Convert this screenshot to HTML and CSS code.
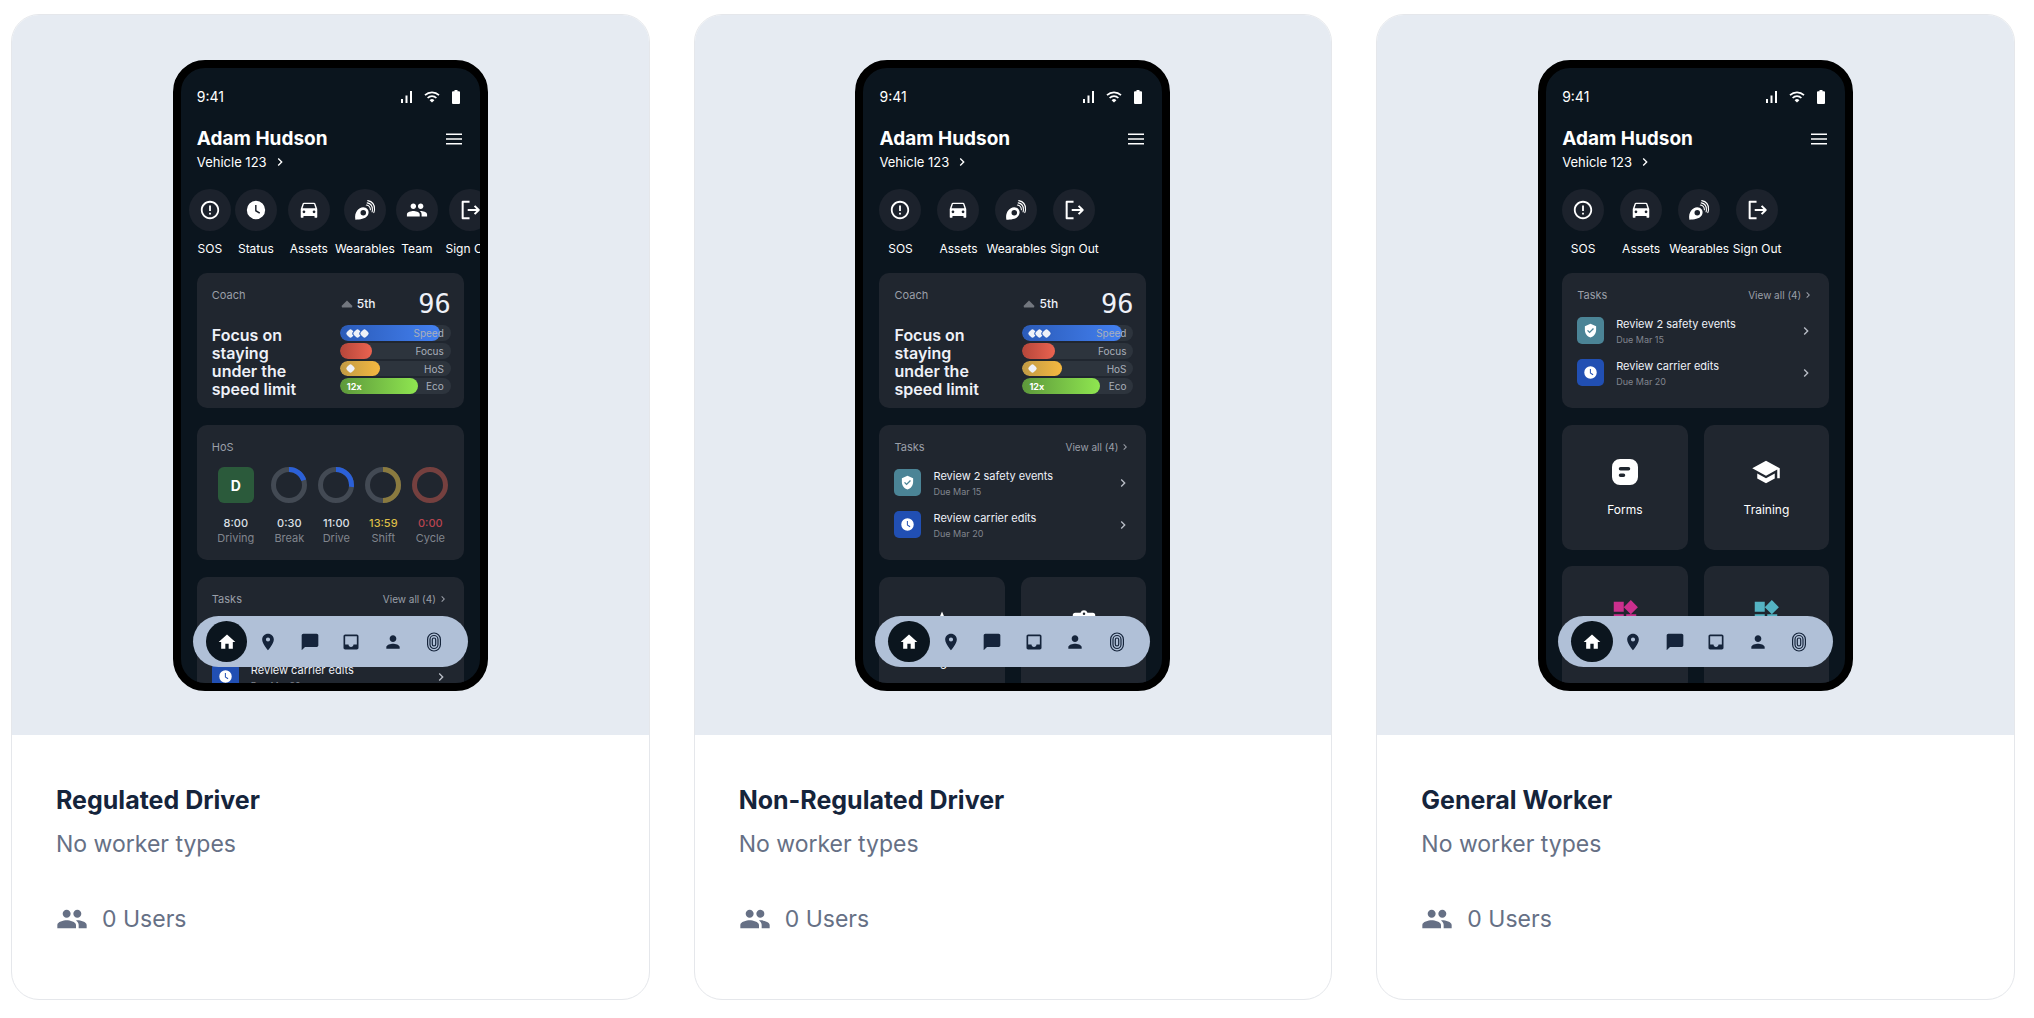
FILE: index.html
```html
<!DOCTYPE html>
<html lang="en">
<head>
<meta charset="utf-8">
<meta name="viewport" content="width=device-width, initial-scale=1">
<title>Worker profiles</title>
<link rel="stylesheet" href="styles.css">
</head>
<body>
<svg class="sprite" aria-hidden="true">
  <symbol id="signal" viewBox="0 0 12 12"><path d="M0 8h2v4H0zM4.500 4.500h2V12h-2zM9 0h2v12H9z"/></symbol>
  <symbol id="wifi" viewBox="0 0 16 12"><path fill="none" stroke="currentColor" stroke-width="1.700" d="M1 4.200a10.200 10.200 0 0 1 14 0M3.600 7a6.300 6.300 0 0 1 8.800 0"/><path d="M5.600 9.200a3.500 3.500 0 0 1 4.800 0L8 11.600z"/></symbol>
  <symbol id="battery" viewBox="0 0 8 14"><path d="M2.500 0h3v1.300H7a1 1 0 0 1 1 1V13a1 1 0 0 1-1 1H1a1 1 0 0 1-1-1V2.300a1 1 0 0 1 1-1h1.500z"/></symbol>
  <symbol id="menu" viewBox="0 0 16 12"><path d="M0 .5h16V2H0zM0 5.200h16v1.500H0zM0 10h16v1.500H0z"/></symbol>
  <symbol id="chevron" viewBox="0 0 24 24"><path d="M8.590 16.590 13.170 12 8.590 7.410 10 6l6 6-6 6z"/></symbol>
  <symbol id="sos" viewBox="0 0 24 24"><path d="M11 15h2v2h-2zm0-8h2v6h-2zm.990-5C6.470 2 2 6.480 2 12s4.470 10 9.990 10C17.520 22 22 17.520 22 12S17.520 2 11.990 2zM12 20c-4.420 0-8-3.580-8-8s3.580-8 8-8 8 3.580 8 8-3.580 8-8 8z"/></symbol>
  <symbol id="clock" viewBox="0 0 24 24"><path fill-rule="evenodd" d="M12 2a10 10 0 1 0 0 20 10 10 0 0 0 0-20zm3.600 14.200L11 13.300V6.500h1.600v5.700l4 2.600z"/></symbol>
  <symbol id="car" viewBox="0 0 24 24"><path d="M18.920 5.010C18.720 4.420 18.160 4 17.500 4h-11c-.660 0-1.210.420-1.420 1.010L3 11v8.500c0 .550.450 1 1 1h1c.550 0 1-.450 1-1V18.500h12v1c0 .550.450 1 1 1h1c.550 0 1-.450 1-1V11zM6.500 15.500a1.500 1.500 0 1 1 0-3 1.500 1.500 0 0 1 0 3zm11 0a1.500 1.500 0 1 1 0-3 1.500 1.500 0 0 1 0 3zM5 10l1.500-4.500h11L19 10z"/></symbol>
  <symbol id="wearable" viewBox="0 0 24 24"><path fill-rule="evenodd" d="M1.500 22.500c-.800-4 0-7.500 2-10C5.600 9.500 9.500 8 12.700 9.500c3.500 1.700 4.200 5.700 2 8.900-2.500 3.500-8 4.100-13.200 4.100zm8.600-10.600a3 3 0 1 0 0 6 3 3 0 0 0 0-6z"/><path fill="none" stroke="currentColor" stroke-width="1.200" stroke-linecap="round" d="M13.500 6.600c2.700.400 4.300 2.400 4.400 5.200M14.400 4.200c3.400.600 5.700 3.400 5.700 7.200 0 1-.100 1.800-.400 2.600M15 1.800c4.600.900 7.500 4.600 7.400 9.300 0 1.500-.300 2.600-.800 3.700"/></symbol>
  <symbol id="people" viewBox="0 0 24 24"><path d="M16 11c1.660 0 2.990-1.340 2.990-3S17.660 5 16 5s-3 1.340-3 3 1.340 3 3 3zm-8 0c1.660 0 2.990-1.340 2.990-3S9.660 5 8 5 5 6.340 5 8s1.340 3 3 3zm0 2c-2.330 0-7 1.170-7 3.500V19h14v-2.500c0-2.330-4.670-3.500-7-3.500zm8 0c-.290 0-.620.020-.970.050 1.160.840 1.970 1.970 1.970 3.450V19h6v-2.500c0-2.330-4.670-3.500-7-3.500z"/></symbol>
  <symbol id="signout" viewBox="0 0 24 24"><path fill="none" stroke="currentColor" stroke-width="2.200" stroke-linejoin="round" d="M11.500 3H4v18h7.500M9.500 12H21M17 7.500l4.500 4.500-4.500 4.500"/></symbol>
  <symbol id="home" viewBox="0 0 24 24"><path d="M10 20v-6h4v6h5v-8h3L12 3 2 12h3v8z"/></symbol>
  <symbol id="pin" viewBox="0 0 24 24"><path d="M12 2C8.130 2 5 5.130 5 9c0 5.250 7 13 7 13s7-7.750 7-13c0-3.870-3.130-7-7-7zm0 9.500a2.500 2.500 0 1 1 0-5 2.500 2.500 0 0 1 0 5z"/></symbol>
  <symbol id="chat" viewBox="0 0 24 24"><path d="M20 2H4c-1.100 0-2 .9-2 2v18l4-4h14c1.100 0 2-.9 2-2V4c0-1.100-.9-2-2-2z"/></symbol>
  <symbol id="inbox" viewBox="0 0 24 24"><path d="M19 3H5c-1.100 0-2 .9-2 2v14c0 1.100.9 2 2 2h14c1.100 0 2-.9 2-2V5c0-1.100-.9-2-2-2zm0 12h-4c0 1.660-1.350 3-3 3s-3-1.340-3-3H5V5h14z"/></symbol>
  <symbol id="person" viewBox="0 0 24 24"><path d="M12 12c2.210 0 4-1.790 4-4s-1.790-4-4-4-4 1.790-4 4 1.790 4 4 4zm0 2c-2.670 0-8 1.340-8 4v2h16v-2c0-2.660-5.330-4-8-4z"/></symbol>
  <symbol id="touch" viewBox="0 0 16 20"><g fill="none" stroke="currentColor" stroke-width="1.200"><rect x="1.600" y="1" width="12.800" height="18" rx="6.400"/><rect x="4" y="3.500" width="8" height="13" rx="4"/><rect x="6.300" y="6" width="3.400" height="8" rx="1.700"/></g></symbol>
  <symbol id="shield" viewBox="0 0 24 24"><path fill-rule="evenodd" d="M12 1 3 5v6c0 5.550 3.840 10.740 9 12 5.160-1.260 9-6.450 9-12V5zm-1.500 15.500L6.500 12.500l1.500-1.500 2.500 2.500 5.500-5.500 1.500 1.500z"/></symbol>
  <symbol id="form" viewBox="0 0 30 30"><path fill-rule="evenodd" d="M10 2h10a8 8 0 0 1 8 8v10a8 8 0 0 1-8 8H10a8 8 0 0 1-8-8V10a8 8 0 0 1 8-8zm.500 8a1.750 1.750 0 0 0 0 3.500h8a1.750 1.750 0 0 0 0-3.500zm0 6.500a1.750 1.750 0 0 0 0 3.500h3a1.750 1.750 0 0 0 0-3.500z"/></symbol>
  <symbol id="school" viewBox="0 0 24 24"><path d="M5 13.180v4L12 21l7-3.820v-4L12 17zM12 3 1 9l11 6 9-4.910V17h2V9z"/></symbol>
  <symbol id="widgets" viewBox="0 0 24 24"><path d="M13 13v8h8v-8zM3 21h8v-8H3zM3 3v8h8V3zm13.660-1.310L11 7.340 16.660 13l5.660-5.660z"/></symbol>
  <symbol id="spark" viewBox="0 0 24 24"><path d="m12 2 3 7 8 3-8 3-3 8-3-8-8-3 8-3z"/></symbol>
  <symbol id="clipboard" viewBox="0 0 24 24"><path fill-rule="evenodd" d="M19 3h-4.200a3 3 0 0 0-5.600 0H5a2 2 0 0 0-2 2v14a2 2 0 0 0 2 2h14a2 2 0 0 0 2-2V5a2 2 0 0 0-2-2zm-7-.200a1 1 0 1 1 0 2 1 1 0 0 1 0-2z"/></symbol>
</svg>

<main class="profiles">
  <article class="profile">
    <div class="preview">
      <div class="phone">
        <div class="statusbar"><span>9:41</span><span class="indicators"><svg class="i-signal"><use href="#signal"/></svg><svg class="i-wifi"><use href="#wifi"/></svg><svg class="i-battery"><use href="#battery"/></svg></span></div>
        <header class="account">
          <div><h3>Adam Hudson</h3><a href="#" class="vehicle">Vehicle 123 <svg><use href="#chevron"/></svg></a></div>
          <button class="menu" aria-label="Menu"><svg><use href="#menu"/></svg></button>
        </header>
        <div class="actions actions-scroll">
          <button><span class="disc"><svg><use href="#sos"/></svg></span>SOS</button>
          <button><span class="disc"><svg><use href="#clock"/></svg></span>Status</button>
          <button><span class="disc"><svg><use href="#car"/></svg></span>Assets</button>
          <button><span class="disc"><svg><use href="#wearable"/></svg></span>Wearables</button>
          <button><span class="disc"><svg><use href="#people"/></svg></span>Team</button>
          <button><span class="disc"><svg><use href="#signout"/></svg></span>Sign Out</button>
        </div>
        <div class="feed">
          <section class="panel coach">
            <div class="advice"><h4>Coach</h4><p>Focus on staying under the speed limit</p></div>
            <div class="score">
              <div class="rank"><svg viewBox="0 0 12 8"><path d="M6 .5 11 5.500Q12 7.500 10 7.500H2Q0 7.500 1 5.500z"/></svg><span>5th</span><strong>96</strong></div>
              <div class="bar"><span class="fill speed" style="width:90%"><i></i><i></i><i></i></span><span class="name">Speed</span></div>
              <div class="bar"><span class="fill focus" style="width:29%"></span><span class="name">Focus</span></div>
              <div class="bar"><span class="fill hos" style="width:36%"><i></i></span><span class="name">HoS</span></div>
              <div class="bar"><span class="fill eco" style="width:70%">12x</span><span class="name">Eco</span></div>
            </div>
          </section>
          <section class="panel">
            <h4>HoS</h4>
            <div class="gauges">
              <div class="gauge"><span class="duty">D</span><b>8:00</b><span>Driving</span></div>
              <div class="gauge"><svg viewBox="0 0 36 36"><circle class="track" cx="18" cy="18" r="15.500"/><circle class="value blue" cx="18" cy="18" r="15.500" pathLength="100" stroke-dasharray="20 100"/></svg><b>0:30</b><span>Break</span></div>
              <div class="gauge"><svg viewBox="0 0 36 36"><circle class="track" cx="18" cy="18" r="15.500"/><circle class="value blue" cx="18" cy="18" r="15.500" pathLength="100" stroke-dasharray="27 100"/></svg><b>11:00</b><span>Drive</span></div>
              <div class="gauge"><svg viewBox="0 0 36 36"><circle class="track" cx="18" cy="18" r="15.500"/><circle class="value gold" cx="18" cy="18" r="15.500" pathLength="100" stroke-dasharray="50 100"/></svg><b class="warn">13:59</b><span>Shift</span></div>
              <div class="gauge"><svg viewBox="0 0 36 36"><circle class="value red" cx="18" cy="18" r="15.500"/></svg><b class="over">0:00</b><span>Cycle</span></div>
            </div>
          </section>
          <section class="panel">
            <div class="panel-head"><h4>Tasks</h4><a href="#">View all (4)<svg><use href="#chevron"/></svg></a></div>
            <a href="#" class="task"><span class="badge teal"><svg><use href="#shield"/></svg></span><span class="task-text">Review 2 safety events<small>Due Mar 15</small></span><svg class="go"><use href="#chevron"/></svg></a>
            <a href="#" class="task"><span class="badge blue"><svg><use href="#clock"/></svg></span><span class="task-text">Review carrier edits<small>Due Mar 20</small></span><svg class="go"><use href="#chevron"/></svg></a>
          </section>
        </div>
        <nav class="tabs" aria-label="Regulated driver tabs">
          <button class="current" aria-label="Home"><svg><use href="#home"/></svg></button>
          <button aria-label="Map"><svg><use href="#pin"/></svg></button>
          <button aria-label="Messages"><svg><use href="#chat"/></svg></button>
          <button aria-label="Inbox"><svg><use href="#inbox"/></svg></button>
          <button aria-label="Profile"><svg><use href="#person"/></svg></button>
          <button aria-label="Identify"><svg><use href="#touch"/></svg></button>
        </nav>
      </div>
    </div>
    <div class="info"><h2>Regulated Driver</h2><p>No worker types</p><p class="users"><svg><use href="#people"/></svg>0 Users</p></div>
  </article>

  <article class="profile">
    <div class="preview">
      <div class="phone">
        <div class="statusbar"><span>9:41</span><span class="indicators"><svg class="i-signal"><use href="#signal"/></svg><svg class="i-wifi"><use href="#wifi"/></svg><svg class="i-battery"><use href="#battery"/></svg></span></div>
        <header class="account">
          <div><h3>Adam Hudson</h3><a href="#" class="vehicle">Vehicle 123 <svg><use href="#chevron"/></svg></a></div>
          <button class="menu" aria-label="Menu"><svg><use href="#menu"/></svg></button>
        </header>
        <div class="actions">
          <button><span class="disc"><svg><use href="#sos"/></svg></span>SOS</button>
          <button><span class="disc"><svg><use href="#car"/></svg></span>Assets</button>
          <button><span class="disc"><svg><use href="#wearable"/></svg></span>Wearables</button>
          <button><span class="disc"><svg><use href="#signout"/></svg></span>Sign Out</button>
        </div>
        <div class="feed">
          <section class="panel coach">
            <div class="advice"><h4>Coach</h4><p>Focus on staying under the speed limit</p></div>
            <div class="score">
              <div class="rank"><svg viewBox="0 0 12 8"><path d="M6 .5 11 5.500Q12 7.500 10 7.500H2Q0 7.500 1 5.500z"/></svg><span>5th</span><strong>96</strong></div>
              <div class="bar"><span class="fill speed" style="width:90%"><i></i><i></i><i></i></span><span class="name">Speed</span></div>
              <div class="bar"><span class="fill focus" style="width:29%"></span><span class="name">Focus</span></div>
              <div class="bar"><span class="fill hos" style="width:36%"><i></i></span><span class="name">HoS</span></div>
              <div class="bar"><span class="fill eco" style="width:70%">12x</span><span class="name">Eco</span></div>
            </div>
          </section>
          <section class="panel">
            <div class="panel-head"><h4>Tasks</h4><a href="#">View all (4)<svg><use href="#chevron"/></svg></a></div>
            <a href="#" class="task"><span class="badge teal"><svg><use href="#shield"/></svg></span><span class="task-text">Review 2 safety events<small>Due Mar 15</small></span><svg class="go"><use href="#chevron"/></svg></a>
            <a href="#" class="task"><span class="badge blue"><svg><use href="#clock"/></svg></span><span class="task-text">Review carrier edits<small>Due Mar 20</small></span><svg class="go"><use href="#chevron"/></svg></a>
          </section>
          <div class="tiles">
            <a href="#" class="tile"><svg><use href="#spark"/></svg>Insights</a>
            <a href="#" class="tile"><svg><use href="#clipboard"/></svg>Forms</a>
          </div>
        </div>
        <nav class="tabs" aria-label="Non-regulated driver tabs">
          <button class="current" aria-label="Home"><svg><use href="#home"/></svg></button>
          <button aria-label="Map"><svg><use href="#pin"/></svg></button>
          <button aria-label="Messages"><svg><use href="#chat"/></svg></button>
          <button aria-label="Inbox"><svg><use href="#inbox"/></svg></button>
          <button aria-label="Profile"><svg><use href="#person"/></svg></button>
          <button aria-label="Identify"><svg><use href="#touch"/></svg></button>
        </nav>
      </div>
    </div>
    <div class="info"><h2>Non-Regulated Driver</h2><p>No worker types</p><p class="users"><svg><use href="#people"/></svg>0 Users</p></div>
  </article>

  <article class="profile">
    <div class="preview">
      <div class="phone">
        <div class="statusbar"><span>9:41</span><span class="indicators"><svg class="i-signal"><use href="#signal"/></svg><svg class="i-wifi"><use href="#wifi"/></svg><svg class="i-battery"><use href="#battery"/></svg></span></div>
        <header class="account">
          <div><h3>Adam Hudson</h3><a href="#" class="vehicle">Vehicle 123 <svg><use href="#chevron"/></svg></a></div>
          <button class="menu" aria-label="Menu"><svg><use href="#menu"/></svg></button>
        </header>
        <div class="actions">
          <button><span class="disc"><svg><use href="#sos"/></svg></span>SOS</button>
          <button><span class="disc"><svg><use href="#car"/></svg></span>Assets</button>
          <button><span class="disc"><svg><use href="#wearable"/></svg></span>Wearables</button>
          <button><span class="disc"><svg><use href="#signout"/></svg></span>Sign Out</button>
        </div>
        <div class="feed">
          <section class="panel">
            <div class="panel-head"><h4>Tasks</h4><a href="#">View all (4)<svg><use href="#chevron"/></svg></a></div>
            <a href="#" class="task"><span class="badge teal"><svg><use href="#shield"/></svg></span><span class="task-text">Review 2 safety events<small>Due Mar 15</small></span><svg class="go"><use href="#chevron"/></svg></a>
            <a href="#" class="task"><span class="badge blue"><svg><use href="#clock"/></svg></span><span class="task-text">Review carrier edits<small>Due Mar 20</small></span><svg class="go"><use href="#chevron"/></svg></a>
          </section>
          <div class="tiles">
            <a href="#" class="tile"><svg><use href="#form"/></svg>Forms</a>
            <a href="#" class="tile"><svg><use href="#school"/></svg>Training</a>
            <a href="#" class="tile" aria-label="Widgets"><svg class="pink"><use href="#widgets"/></svg></a>
            <a href="#" class="tile" aria-label="More widgets"><svg class="aqua"><use href="#widgets"/></svg></a>
          </div>
        </div>
        <nav class="tabs" aria-label="General worker tabs">
          <button class="current" aria-label="Home"><svg><use href="#home"/></svg></button>
          <button aria-label="Map"><svg><use href="#pin"/></svg></button>
          <button aria-label="Messages"><svg><use href="#chat"/></svg></button>
          <button aria-label="Inbox"><svg><use href="#inbox"/></svg></button>
          <button aria-label="Profile"><svg><use href="#person"/></svg></button>
          <button aria-label="Identify"><svg><use href="#touch"/></svg></button>
        </nav>
      </div>
    </div>
    <div class="info"><h2>General Worker</h2><p>No worker types</p><p class="users"><svg><use href="#people"/></svg>0 Users</p></div>
  </article>
</main>
</body>
</html>
```
FILE: styles.css
```css
* { box-sizing: border-box; }
body { margin: 0; background: #fff; color: #15243b; font-family: Inter, "Liberation Sans", sans-serif; }
h2, h3, h4, p { margin: 0; }
a { color: inherit; text-decoration: none; }
button { border: 0; padding: 0; background: none; color: inherit; font: inherit; cursor: pointer; }
svg { display: block; fill: currentColor; flex: none; }
.sprite { position: absolute; width: 0; height: 0; }

.profiles { display: grid; grid-template-columns: repeat(auto-fit, minmax(420px, 1fr)); gap: 44px; padding: 14px 19px 18px 11px; }
.profile { border: 1px solid #e5e7eb; border-radius: 28px; overflow: hidden; }
.preview { display: flex; justify-content: center; padding: 45px 0 44px; background: #e6ebf2; }

/* Phone mock-up */
.phone { position: relative; display: flex; flex-direction: column; width: 315px; height: 631px; border: 8px solid #000; border-radius: 32px; background: #0b151e; color: #fff; overflow: hidden; }
.statusbar { display: flex; justify-content: space-between; align-items: center; padding: 19px 20px 0 16px; font-size: 14px; line-height: 20px; }
.indicators { display: flex; align-items: center; gap: 11px; }
.i-signal { width: 12px; height: 12px; }
.i-wifi { width: 16px; height: 12px; margin-right: 1px; }
.i-battery { width: 8px; height: 14px; }
.account { display: flex; justify-content: space-between; padding: 20px 18px 0 16px; }
.account h3 { font-size: 19px; line-height: 24px; font-weight: 700; }
.vehicle { display: flex; align-items: center; gap: 5px; margin-top: 2px; font-size: 13px; line-height: 18px; }
.vehicle svg { width: 16px; height: 16px; }
.menu { align-self: flex-start; margin-top: 6px; }
.menu svg { width: 16px; height: 12px; }

.actions { display: grid; grid-template-columns: repeat(4, 58px); padding: 18px 0 0 8px; font-size: 12px; line-height: 16px; }
.actions-scroll { grid-template-columns: 46px 46px 60px 52px 52px 54px; padding-left: 6px; }
.actions button { display: flex; flex-direction: column; align-items: center; gap: 10px; white-space: nowrap; }
.disc { display: grid; place-items: center; flex: none; width: 42px; height: 42px; border-radius: 50%; background: #1c222c; }
.disc svg { width: 22px; height: 22px; }

.feed { display: flex; flex-direction: column; gap: 17px; padding: 16px 16px 0; }
.panel { flex: none; height: 135px; padding: 14px 15px; border-radius: 10px; background: #20262f; }
.panel h4 { color: #9a9fa8; font-size: 11px; line-height: 16px; font-weight: 400; }
.coach { display: flex; justify-content: space-between; padding-right: 13px; }
.advice { width: 96px; }
.advice p { margin-top: 23px; color: #eef1f8; font-size: 16px; line-height: 18px; font-weight: 600; }
.score { display: flex; flex-direction: column; gap: 2px; width: 111px; }
.rank { display: flex; align-items: center; height: 37px; padding: 0 0 3px 1px; font-size: 12px; font-weight: 500; color: #eef1f8; }
.rank svg { width: 12px; height: 8px; margin-right: 4px; color: #72777f; }
.rank strong { margin-left: auto; font: 400 27px/24px "DejaVu Sans Mono", monospace; }
.bar { position: relative; display: flex; align-items: center; justify-content: flex-end; height: 16px; padding-right: 7px; border-radius: 8px; background: #2d343d; overflow: hidden; }
.fill { position: absolute; inset: 0 auto 0 0; display: flex; align-items: center; padding-left: 7px; border-radius: 8px; font-size: 9px; font-weight: 700; }
.fill i { width: 7px; height: 7px; border-radius: 2px; background: #eef1f8; transform: rotate(45deg); }
.fill.speed { background: linear-gradient(90deg, #2b5bb8, #4380f0); }
.fill.speed i { box-shadow: 0 0 0 1px #2e60c2; }
.fill.focus { background: linear-gradient(90deg, #b5463a, #ea6350); }
.fill.hos { background: linear-gradient(90deg, #c09a45, #f5b840); }
.fill.eco { background: linear-gradient(90deg, #5d983b, #8fe650); }
.name { position: relative; color: #a9afba; font-size: 10px; line-height: 16px; }

.gauges { display: grid; grid-template-columns: 60px repeat(4, 1fr); margin: 12px -5px 0 -6px; }
.gauge { display: flex; flex-direction: column; align-items: center; color: #80858e; font-size: 11px; line-height: 15px; }
.gauge svg, .duty { width: 36px; height: 36px; margin-bottom: 13px; }
.duty { display: grid; place-items: center; border-radius: 6px; background: #2b5a3b; color: #fff; font-size: 14px; font-weight: 700; }
.gauge b { color: #dde0e6; font-weight: 500; }
.gauge b.warn { color: #dcbc46; }
.gauge b.over { color: #b8444f; }
.track, .value { fill: none; stroke-width: 5; }
.track { stroke: #434a54; }
.value { transform: rotate(-90deg); transform-origin: center; }
.value.blue { stroke: #2b60d8; }
.value.gold { stroke: #8a7a3f; }
.value.red { stroke: #75403f; }

.panel-head { display: flex; justify-content: space-between; color: #9a9fa8; font-size: 10px; line-height: 16px; }
.panel-head a { display: flex; align-items: center; gap: 1px; }
.panel-head svg { width: 12px; height: 12px; }
.task { display: flex; align-items: center; height: 27px; margin-top: 15px; }
.panel-head + .task { margin-top: 14px; }
.badge { display: grid; place-items: center; width: 27px; height: 27px; margin-right: 12px; border-radius: 5px; }
.badge.teal { background: #4b8496; }
.badge.blue { background: #214fb3; }
.badge svg { width: 15px; height: 15px; }
.task-text { display: flex; flex-direction: column; flex: 1; padding-top: 3px; color: #eef1f8; font-size: 11px; line-height: 15px; }
.task-text small { color: #80858e; font-size: 9px; line-height: 15px; }
.go { width: 16px; height: 16px; color: #b9bec7; }

.tiles { display: grid; grid-template-columns: 1fr 1fr; gap: 16px; }
.tile { display: flex; flex-direction: column; align-items: center; height: 125px; padding-top: 32px; border-radius: 10px; background: #20262f; font-size: 12px; line-height: 16px; }
.tile svg { width: 30px; height: 30px; margin-bottom: 15px; }
.pink { color: #cb2f8d; }
.aqua { color: #54b3c3; }

/* Floating tab bar */
.tabs { position: absolute; left: 12px; right: 12px; bottom: 16px; display: flex; height: 51px; padding: 5px 13px; border-radius: 26px; background: #b0c0d7; color: #15243b; }
.tabs button { display: grid; place-items: center; flex: 1; border-radius: 50%; }
.tabs svg { width: 20px; height: 20px; }
.tabs .current { background: #0b151e; color: #fff; }

.info { padding: 48px 44px 63px; }
.info h2 { font-size: 25px; line-height: 34px; font-weight: 700; }
.info p { margin-top: 10px; color: #667085; font-size: 23px; line-height: 34px; }
.info .users { display: flex; align-items: center; gap: 14px; margin-top: 41px; }
.users svg { width: 32px; height: 32px; }
```
